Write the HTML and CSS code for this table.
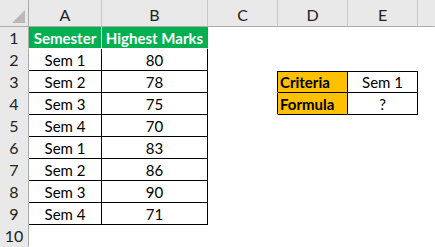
FILE: index.html
```html
<!DOCTYPE html>
<html>
<head>
<meta charset="utf-8">
<link rel="stylesheet" href="styles.css">
</head>
<body>
<div class="sheet">
  <div class="c ch corner"><span class="tri"></span></div>
  <div class="c ch">A</div>
  <div class="c ch">B</div>
  <div class="c ch">C</div>
  <div class="c ch">D</div>
  <div class="c ch">E</div>
  <div class="c ch last"></div>

  <div class="c rh">1</div>
  <div class="c hd sepw">Semester</div>
  <div class="c hd">Highest Marks</div>
  <div class="c"></div><div class="c"></div><div class="c"></div><div class="c"></div>

  <div class="c rh">2</div>
  <div class="c d">Sem 1</div><div class="c d">80</div>
  <div class="c"></div><div class="c"></div><div class="c"></div><div class="c"></div>

  <div class="c rh">3</div>
  <div class="c d">Sem 2</div><div class="c d">78</div>
  <div class="c edge"></div><div class="c lab top">Criteria</div><div class="c d top">Sem 1</div><div class="c"></div>

  <div class="c rh">4</div>
  <div class="c d">Sem 3</div><div class="c d">75</div>
  <div class="c edge"></div><div class="c lab">Formula</div><div class="c d">?</div><div class="c"></div>

  <div class="c rh">5</div>
  <div class="c d">Sem 4</div><div class="c d">70</div>
  <div class="c"></div><div class="c"></div><div class="c"></div><div class="c"></div>

  <div class="c rh">6</div>
  <div class="c d">Sem 1</div><div class="c d">83</div>
  <div class="c"></div><div class="c"></div><div class="c"></div><div class="c"></div>

  <div class="c rh">7</div>
  <div class="c d">Sem 2</div><div class="c d">86</div>
  <div class="c"></div><div class="c"></div><div class="c"></div><div class="c"></div>

  <div class="c rh">8</div>
  <div class="c d">Sem 3</div><div class="c d">90</div>
  <div class="c"></div><div class="c"></div><div class="c"></div><div class="c"></div>

  <div class="c rh">9</div>
  <div class="c d">Sem 4</div><div class="c d">71</div>
  <div class="c"></div><div class="c"></div><div class="c"></div><div class="c"></div>

  <div class="c rh">10</div>
  <div class="c"></div><div class="c"></div>
  <div class="c"></div><div class="c"></div><div class="c"></div><div class="c"></div>
</div>
</body>
</html>
```
FILE: styles.css
```css
html, body {
  margin: 0;
  padding: 0;
  background: #ffffff;
}
.sheet {
  display: grid;
  grid-template-columns: 29px 73px 106px 70px 70px 70px 1fr;
  grid-template-rows: 27px repeat(10, 22px);
  width: 435px;
  height: 247px;
  overflow: hidden;
  font-family: Lato, "Open Sans", sans-serif;
  font-size: 15px;
  color: #000;
}
.c {
  box-sizing: border-box;
  display: flex;
  align-items: center;
  justify-content: center;
  border-right: 1px solid transparent;
  border-bottom: 1px solid transparent;
  white-space: nowrap;
}
.ch {
  background: #e9e9e9;
  border-right-color: #c8c8c8;
  border-bottom-color: #ababab;
  font-size: 16px;
  color: #222;
  padding-top: 3px;
}
.ch.last {
  border-right-color: transparent;
}
.corner {
  position: relative;
  border-right-color: #ababab;
}
.tri {
  position: absolute;
  right: 3px;
  bottom: 3px;
  width: 0;
  height: 0;
  border-left: 13px solid transparent;
  border-bottom: 13px solid #b9b9b9;
}
.rh {
  background: #e9e9e9;
  border-right-color: #ababab;
  border-bottom-color: #e9e9e9;
  font-size: 16px;
  color: #222;
}
.hd {
  background: #00b050;
  color: #ffffff;
  font-weight: 700;
  border-bottom-color: #ffffff;
  border-right-color: #00b050;
}
.hd.sepw {
  border-right-color: #e8f5ec;
}
.d {
  border-right-color: #000;
  border-bottom-color: #000;
}
.edge {
  border-right-color: #000;
}
.lab {
  background: #ffc000;
  font-weight: 700;
  justify-content: flex-start;
  padding-left: 2px;
  border-right-color: #000;
  border-bottom-color: #000;
}
.top {
  box-shadow: inset 0 1px 0 #000;
}
```
